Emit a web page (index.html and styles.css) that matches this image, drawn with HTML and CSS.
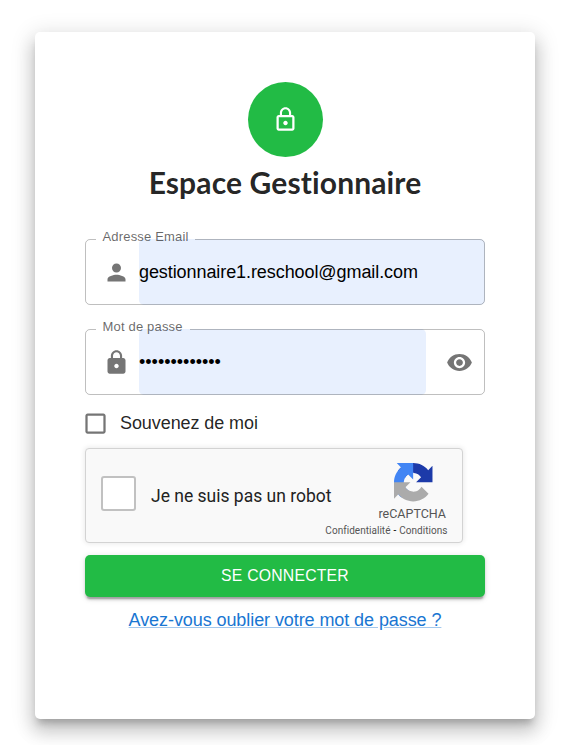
FILE: index.html
```html
<!DOCTYPE html>
<html lang="fr">
<head>
<meta charset="utf-8">
<title>Espace Gestionnaire</title>
<link rel="stylesheet" href="styles.css">
</head>
<body>
<main class="card">
  <div class="avatar"><svg class="icon" viewBox="0 0 24 24"><path d="M12 17c1.1 0 2-.9 2-2s-.9-2-2-2-2 .9-2 2 .9 2 2 2zm6-9h-1V6c0-2.76-2.24-5-5-5S7 3.24 7 6v2H6c-1.1 0-2 .9-2 2v10c0 1.1.9 2 2 2h12c1.1 0 2-.9 2-2V10c0-1.1-.9-2-2-2zM8.9 6c0-1.71 1.39-3.1 3.1-3.1s3.1 1.39 3.1 3.1v2H8.9V6zM18 20H6V10h12v10z"/></svg></div>
  <h1 class="title"><span>Espace Gestionnaire</span></h1>
  <div class="field">
    <svg class="icon" viewBox="0 0 24 24"><path d="M12 12c2.21 0 4-1.79 4-4s-1.79-4-4-4-4 1.79-4 4 1.79 4 4 4zm0 2c-2.67 0-8 1.34-8 4v2h16v-2c0-2.66-5.33-4-8-4z"/></svg>
    <div class="input input-email"><span>gestionnaire1.reschool@gmail.com</span></div>
    <fieldset class="outline"><legend class="notch-email"><span class="label">Adresse Email</span></legend></fieldset>
  </div>
  <div class="field">
    <svg class="icon" viewBox="0 0 24 24"><path d="M18 8h-1V6c0-2.76-2.24-5-5-5S7 3.24 7 6v2H6c-1.1 0-2 .9-2 2v10c0 1.1.9 2 2 2h12c1.1 0 2-.9 2-2V10c0-1.1-.9-2-2-2zm-6 9c-1.1 0-2-.9-2-2s.9-2 2-2 2 .9 2 2-.9 2-2 2zm3.1-9H8.9V6c0-1.71 1.39-3.1 3.1-3.1 1.71 0 3.1 1.39 3.1 3.1v2z"/></svg>
    <div class="input input-password"><span>•••••••••••••</span></div>
    <svg class="icon eye" viewBox="0 0 24 24"><path d="M12 4.5C7 4.5 2.73 7.61 1 12c1.73 4.39 6 7.5 11 7.5s9.27-3.11 11-7.5c-1.73-4.39-6-7.5-11-7.5zM12 17c-2.76 0-5-2.24-5-5s2.24-5 5-5 5 2.24 5 5-2.24 5-5 5zm0-8c-1.66 0-3 1.34-3 3s1.34 3 3 3 3-1.34 3-3-1.34-3-3-3z"/></svg>
    <fieldset class="outline"><legend class="notch-password"><span class="label">Mot de passe</span></legend></fieldset>
  </div>
  <div class="remember">
    <svg class="icon" viewBox="0 0 24 24"><path d="M19 5v14H5V5h14m0-2H5c-1.1 0-2 .9-2 2v14c0 1.1.9 2 2 2h14c1.1 0 2-.9 2-2V5c0-1.1-.9-2-2-2z"/></svg>
    <span>Souvenez de moi</span>
  </div>
  <div class="captcha">
    <div class="captcha-box"></div>
    <div class="captcha-text"><span>Je ne suis pas un robot</span></div>
    <div class="captcha-brand">
      <svg class="captcha-logo" viewBox="0 0 64 64"><path fill="#1c3aa9" d="M64 31.955l-.033-1.37V4.687l-7.16 7.16C50.948 4.674 42.033.093 32.05.093c-10.4 0-19.622 4.96-25.458 12.64l11.736 11.86a15.55 15.55 0 0 1 4.754-5.334c2.05-1.6 4.952-2.906 8.968-2.906.485 0 .86.057 1.135.163 4.976.393 9.288 3.14 11.828 7.124l-8.307 8.307L64 31.953"/><path fill="#4285f4" d="M31.862.094l-1.37.033H4.594l7.16 7.16C4.58 13.147 0 22.06 0 32.046c0 10.4 4.96 19.622 12.64 25.458L24.5 45.768a15.55 15.55 0 0 1-5.334-4.754c-1.6-2.05-2.906-4.952-2.906-8.968 0-.485.057-.86.163-1.135.393-4.976 3.14-9.288 7.124-11.828l8.307 8.307L31.86.095"/><path fill="#ababab" d="M.001 32.045l.033 1.37v25.898l7.16-7.16c5.86 7.173 14.774 11.754 24.76 11.754 10.4 0 19.622-4.96 25.458-12.64l-11.736-11.86a15.55 15.55 0 0 1-4.754 5.334c-2.05 1.6-4.952 2.906-8.968 2.906-.485 0-.86-.057-1.135-.163-4.976-.393-9.288-3.14-11.828-7.124l8.307-8.307c-10.522.04-22.4.066-27.295-.005"/></svg>
      <div class="captcha-name">reCAPTCHA</div>
      <div class="captcha-legal"><span>Confidentialité</span><span class="dash">-</span><span>Conditions</span></div>
    </div>
  </div>
  <div class="submit"><span>SE CONNECTER</span></div>
  <div class="forgot"><a>Avez-vous oublier votre mot de passe ?</a></div>
</main>
</body>
</html>
```
FILE: styles.css
```css
* { box-sizing: border-box; }
body {
  margin: 0;
  height: 745px;
  overflow: hidden;
  background: #fff;
  color: rgba(0, 0, 0, .87);
  font: 18px/27px "Liberation Sans", Arial, sans-serif;
  letter-spacing: -.08px;
  white-space: nowrap;
}
.card {
  width: 500px;
  height: 687px;
  margin: 32px 0 0 35px;
  padding: 50px;
  display: flex;
  flex-direction: column;
  border-radius: 5px;
  box-shadow: 0 7.5px 7.5px -3.75px rgba(0,0,0,.2), 0 12.5px 17.5px 1.25px rgba(0,0,0,.14), 0 5px 22.5px 3.75px rgba(0,0,0,.12);
}
.icon { width: 27px; height: 27px; flex: none; fill: #757575; }
.avatar {
  width: 75px;
  height: 75px;
  margin-left: 163px;
  padding: 0 1px 1px 0;
  border-radius: 50%;
  background: #22bb45;
  display: flex;
  align-items: center;
  justify-content: center;
}
.avatar .icon { fill: #fff; }
.title {
  margin: 7px 0 0;
  height: 37px;
  font: 700 30px/36px Lato, sans-serif;
  font-variant-ligatures: none;
  letter-spacing: .13px;
  text-align: center;
}
.field {
  position: relative;
  height: 66px;
  margin-top: 38px;
  padding-left: 17.5px;
  display: flex;
  align-items: center;
  flex: none;
}
.field + .field { margin-top: 24px; }
.input {
  height: 66px;
  margin-left: 9.5px;
  border-radius: 5px;
  background: #e8f0fe;
  color: #000;
  line-height: 66px;
}
.input-email { width: 346px; }
.input-password { width: 287px; letter-spacing: 0; }
.eye { margin-left: 20px; }
.outline {
  position: absolute;
  inset: -8px 0 0;
  margin: 0;
  padding: 0 10px;
  border: 1px solid rgba(0, 0, 0, .25);
  border-radius: 5px;
}
.outline legend { padding: 0 0 0 6.5px; height: 17px; line-height: 8px; }
.notch-email { width: 99px; }
.notch-password { width: 94px; }
.label { color: rgba(0, 0, 0, .6); font-size: 13px; letter-spacing: .18px; }
.remember {
  height: 27px;
  margin-top: 15px;
  margin-left: -2.9px;
  display: flex;
  gap: 10.9px;
}
.captcha {
  width: 378px;
  height: 95px;
  flex: none;
  margin-top: 11px;
  padding: 0 14.5px 0 15px;
  display: flex;
  align-items: center;
  border: 1px solid #d3d3d3;
  border-radius: 4px;
  background: #f9f9f9;
  box-shadow: 0 0 5px 1px rgba(0, 0, 0, .08);
  font-family: Roboto, sans-serif;
  letter-spacing: 0;
}
.captcha-box {
  width: 35px;
  height: 35px;
  margin-top: -5px;
  border: 2px solid #c1c1c1;
  border-radius: 3px;
  background: #fff;
}
.captcha-text { margin-left: 15px; padding-top: 2px; width: 173.5px; font-size: 17.5px; color: #222; }
.captcha-brand {
  width: 123px;
  height: 93px;
  padding-top: 14px;
  display: flex;
  flex-direction: column;
  align-items: flex-end;
  color: #555;
}
.captcha-logo { width: 38.5px; height: 38.5px; flex: none; margin-right: 15px; }
.captcha-name { height: 22px; margin-right: 1.5px; font-size: 12.5px; line-height: 24px; }
.captcha-legal { display: flex; gap: 3px; font-size: 10px; line-height: 14px; letter-spacing: .03px; }
.dash { color: #000; }
.submit {
  height: 42px;
  flex: none;
  margin-top: 12px;
  border-radius: 5px;
  background: #22bb45;
  color: #fff;
  font-size: 15.75px;
  line-height: 42px;
  letter-spacing: .22px;
  text-align: center;
  box-shadow: 0 3.75px 1.25px -2.5px rgba(0,0,0,.2), 0 2.5px 2.5px rgba(0,0,0,.14), 0 1.25px 6.25px rgba(0,0,0,.12);
}
.forgot { margin-top: 10px; text-align: center; }
.forgot a {
  color: #1976d2;
  text-decoration: underline;
  text-decoration-color: rgba(25, 118, 210, .4);
}
```
